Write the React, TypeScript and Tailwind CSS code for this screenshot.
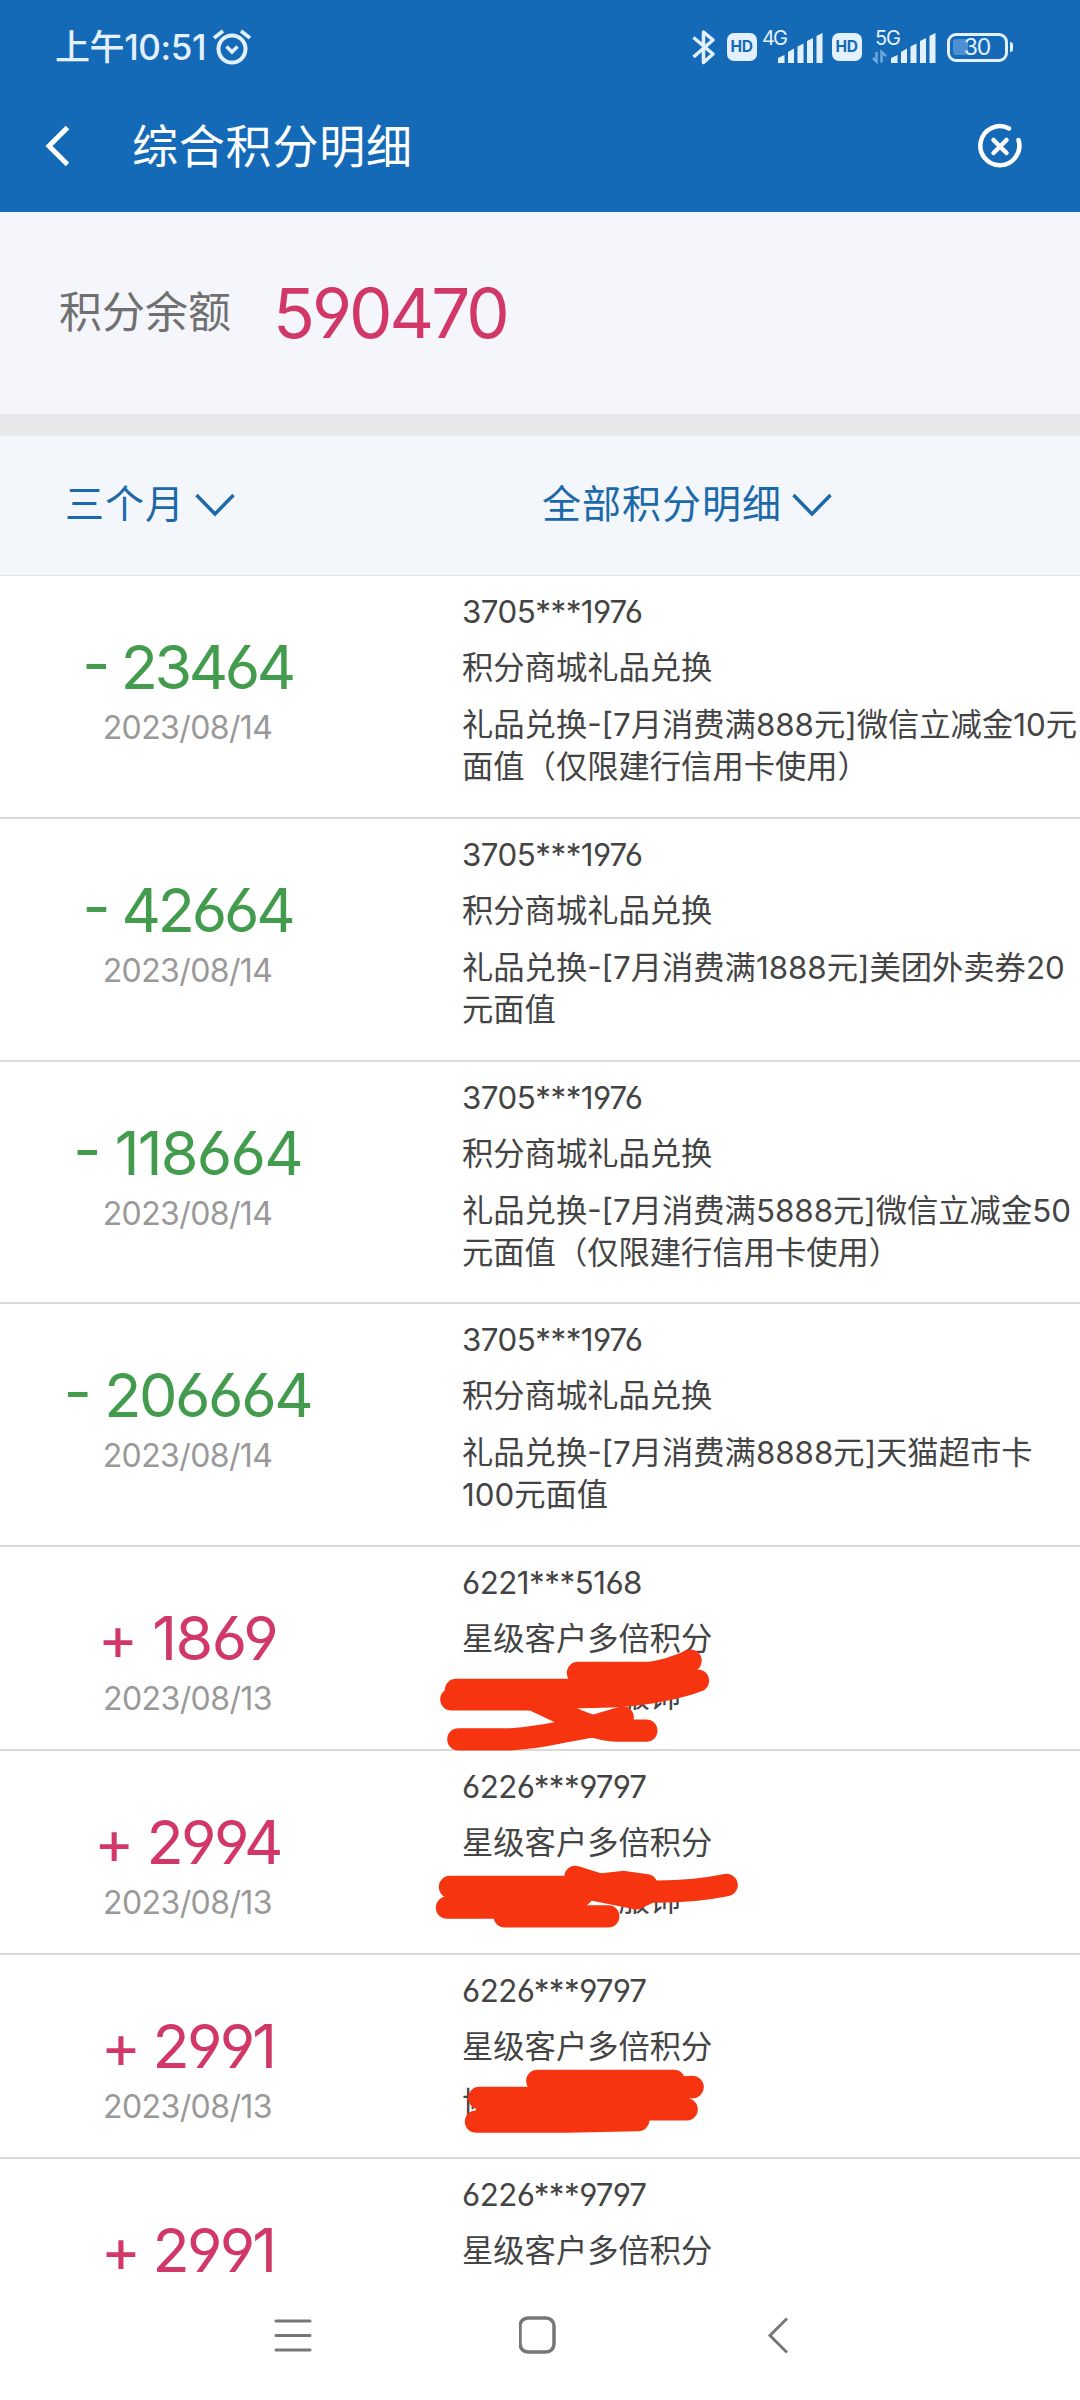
import type { ReactNode } from "react";
import clsx from "clsx";

interface Entry {
  sign: "-" | "+";
  amount: string;
  tracking: string;
  date?: string;
  card: string;
  title: string;
  detail: string[];
  mark?: ReactNode;
}

const GIFT = "积分商城礼品兑换";
const STAR = "星级客户多倍积分";

// Freehand redaction strokes drawn over a row
function Marker({ className, children }: { className: string; children: ReactNode }) {
  return (
    <svg
      viewBox="0 0 1080 660"
      className={clsx("absolute left-[420px] z-10 h-[220px] w-[360px] overflow-visible", className)}
      fill="none"
      stroke="#f63510"
      strokeWidth={67}
      strokeLinecap="round"
      strokeLinejoin="round"
    >
      {children}
    </svg>
  );
}

const MARK_A = (
  <Marker className="-top-[7px]">
    <path d="M108 450H470M94 478H345" />
    <path d="M474 399H690Q750 390 812 362" />
    <path d="M480 425L780 412" />
    <path d="M345 470Q560 475 660 462Q770 447 834 422" />
    <path d="M344 481L430 522Q520 568 590 572H679" />
    <path d="M115 598H270Q350 592 420 577L525 557L608 532" />
  </Marker>
);

const MARK_B = (
  <Marker className="-top-px">
    <path d="M90 411H470M81 473H400Q450 470 490 430M254 499H565" />
    <path d="M466 381L540 404L610 396L680 406" />
    <path d="M500 415L650 445L690 425H710Q830 424 920 405" />
  </Marker>
);

const MARK_C = (
  <Marker className="-top-[5px]">
    <path d="M352 393H762M178 444H600M168 515H440L655 510" />
    <path d="M202 480H600M300 478H800M480 430L818 411" />
  </Marker>
);

const ENTRIES: Entry[] = [
  {
    sign: "-",
    amount: "23464",
    tracking: "tracking-[-3.4px]",
    date: "2023/08/14",
    card: "3705***1976",
    title: GIFT,
    detail: ["礼品兑换-[7月消费满888元]微信立减金10元", "面值（仅限建行信用卡使用）"],
  },
  {
    sign: "-",
    amount: "42664",
    tracking: "tracking-[-3.2px]",
    date: "2023/08/14",
    card: "3705***1976",
    title: GIFT,
    detail: ["礼品兑换-[7月消费满1888元]美团外卖券20", "元面值"],
  },
  {
    sign: "-",
    amount: "118664",
    tracking: "tracking-[-1.8px]",
    date: "2023/08/14",
    card: "3705***1976",
    title: GIFT,
    detail: ["礼品兑换-[7月消费满5888元]微信立减金50", "元面值（仅限建行信用卡使用）"],
  },
  {
    sign: "-",
    amount: "206664",
    tracking: "tracking-[-2.4px]",
    date: "2023/08/14",
    card: "3705***1976",
    title: GIFT,
    detail: ["礼品兑换-[7月消费满8888元]天猫超市卡", "100元面值"],
  },
  {
    sign: "+",
    amount: "1869",
    tracking: "tracking-[-1.5px]",
    date: "2023/08/13",
    card: "6221***5168",
    title: STAR,
    detail: ["　　　　　服饰"],
    mark: MARK_A,
  },
  {
    sign: "+",
    amount: "2994",
    tracking: "tracking-[-2.6px]",
    date: "2023/08/13",
    card: "6226***9797",
    title: STAR,
    detail: ["　　　　　服饰"],
    mark: MARK_B,
  },
  {
    sign: "+",
    amount: "2991",
    tracking: "tracking-[-2.8px]",
    date: "2023/08/13",
    card: "6226***9797",
    title: STAR,
    detail: ["协"],
    mark: MARK_C,
  },
  { sign: "+", amount: "2991", tracking: "tracking-[-2.8px]", card: "6226***9797", title: STAR, detail: [] },
];

function HdBadge() {
  return (
    <span className="flex h-7 w-[30px] items-center justify-center rounded-[7px] bg-[#e3f0ff] text-[15.5px] font-bold tracking-[-0.5px] text-[#146ab7]">
      HD
    </span>
  );
}

function Signal({ label, data }: { label: string; data?: boolean }) {
  return (
    <svg width="60" height="36" viewBox="0 0 60 36" fill="#e3f0ff" className="overflow-visible">
      <text x="0" y="16" fontSize="20" fontFamily="Inter" textLength="26">{label}</text>
      <path d="M16 34v-5l6.5-3v8zM26 34V23l6-3.5V34zM35.5 34V17.5l6-3V34zM45 34V12l6-3v25zM54.5 34V7l6-3v30z" />
      {data && (
        <path d="M-2 29l3.500 3.500V23M6.500 33.500V23L11 27" fill="none" stroke="#6fa8dd" strokeWidth="2.5" />
      )}
    </svg>
  );
}

function StatusBar() {
  return (
    <div className="flex h-[94px] items-center pl-[55px] pr-[67px] text-[#e3f0ff]">
      <span className="text-[35px] font-medium leading-none tracking-[-0.4px]">上午10:51</span>
      <svg width="40" height="36" viewBox="0 0 40 36" fill="none" stroke="currentColor" strokeWidth="4" className="ml-[6px]">
        <circle cx="20" cy="20" r="13.5" />
        <path d="M2 9l9-7M38 9l-9-7M14.5 17.5l5.5 5.5 5.5-5.5" strokeWidth="3.5" />
      </svg>
      <div className="ml-auto flex items-center">
        <svg width="24" height="36" viewBox="0 0 24 36" fill="none" stroke="currentColor" strokeWidth="3.5" strokeLinejoin="round">
          <path d="M1.500 8.500L21 25 11.500 33.500V3L21 11 1.500 28" />
        </svg>
        <span className="ml-[11px]"><HdBadge /></span>
        <span className="ml-[5px]"><Signal label="4G" /></span>
        <span className="ml-[10px]"><HdBadge /></span>
        <span className="ml-[13px]"><Signal label="5G" data /></span>
        <span className="relative ml-[12px] flex h-[29px] w-[61px] items-center justify-center rounded-[9px] border-[3.5px] border-[#e3f0ff]">
          <span className="absolute left-[3.5px] top-[3px] h-4 w-[15px] rounded-[3px] bg-[#4d8fd0]" />
          <span className="relative text-[23px] leading-none tracking-[-1px]">30</span>
        </span>
        <span className="ml-[2px] h-[10px] w-[3.5px] rounded-r-[3px] bg-[#e3f0ff]" />
      </div>
    </div>
  );
}

function TitleBar() {
  return (
    <div className="flex h-[118px] items-center pb-[14px] pl-[45px] pr-[57px] text-white">
      <svg width="26" height="42" viewBox="0 0 26 42" fill="none" stroke="currentColor" strokeWidth="5">
        <path d="M22.500 2.500L4 21l18.500 18.500" />
      </svg>
      <h1 className="ml-[61px] text-[46px] leading-none tracking-[0.8px]">综合积分明细</h1>
      <svg
        width="46"
        height="46"
        viewBox="0 0 46 46"
        fill="none"
        stroke="currentColor"
        strokeWidth="4.5"
        strokeLinecap="round"
        className="ml-auto"
      >
        <path d="M32 5.500A19.500 19.500 0 1 0 41.500 17" />
        <path d="M16.500 17l13 13M29.500 17l-13 13" />
      </svg>
    </div>
  );
}

function Filter({ label }: { label: string }) {
  return (
    <button type="button" className="flex items-center gap-[10px] text-[39px] leading-none tracking-[1px] text-[#1c69a9]">
      {label}
      <svg width="40" height="24" viewBox="0 0 40 24" fill="none" stroke="currentColor" strokeWidth="3.5" className="mt-0.5">
        <path d="M1.500 2L20 21 38.500 2" />
      </svg>
    </button>
  );
}

function Row({ entry }: { entry: Entry }) {
  const spent = entry.sign === "-";

  return (
    <li
      className={clsx(
        "relative flex shrink-0 border-b-2 border-[#dadada]",
        spent ? "h-[242.75px]" : "h-[204px]",
      )}
    >
      <div className="flex w-[375px] flex-col items-center pt-[61px]">
        <p
          className={clsx(
            "text-[61px] leading-[60px]",
            entry.tracking,
            spent ? "text-[#439b4d]" : "text-[#d13868]",
          )}
        >
          <span className={clsx("inline-block", spent && "-translate-y-1")}>{entry.sign}</span> {entry.amount}
        </p>
        {entry.date && (
          <p className="mt-[10px] text-[32px] leading-[42px] tracking-[-0.6px] text-[#999]">{entry.date}</p>
        )}
      </div>
      <div className="ml-[87px] flex flex-col pt-[15px] text-[31.3px] leading-[42px] whitespace-nowrap text-[#444]">
        <p className="tracking-[-0.5px]">{entry.card}</p>
        <p className="mt-[14px]">{entry.title}</p>
        <div className="mt-[15px]">
          {entry.detail.map((line) => (
            <p key={line}>{line}</p>
          ))}
        </div>
      </div>
      {entry.mark}
    </li>
  );
}

function SystemNav() {
  return (
    <div className="flex h-[110px] shrink-0 gap-[207px] bg-white pl-[274px] pt-[24px]">
      <svg width="38" height="42" viewBox="0 0 38 42" stroke="#777" strokeWidth="3" strokeLinecap="round">
        <path d="M2 7h34M2 21.500h34M2 36h34" />
      </svg>
      <svg width="38" height="42" viewBox="0 0 38 42" fill="none" stroke="#777" strokeWidth="3.5">
        <rect x="1" y="4" width="34" height="34" rx="8" />
      </svg>
      <svg width="38" height="42" viewBox="0 0 38 42" fill="none" stroke="#777" strokeWidth="3">
        <path d="M23 4.500L6 21.500l17 17" />
      </svg>
    </div>
  );
}

export default function App() {
  return (
    <div className="flex h-[2400px] w-[1080px] flex-col overflow-hidden bg-white font-['Inter','Noto_Sans_CJK_SC',sans-serif] [font-feature-settings:'cv03','cv04']">
      <header className="h-[212px] shrink-0 bg-[#146ab7]">
        <StatusBar />
        <TitleBar />
      </header>

      <section className="flex h-[202px] shrink-0 items-center bg-[#f5f6fb] pl-[59px]">
        <span className="mb-0.5 text-[43px] leading-none text-[#707070]">积分余额</span>
        <span className="ml-[42px] text-[69px] leading-none tracking-[-3px] text-[#d13868]">590470</span>
      </section>
      <div className="h-[22px] shrink-0 bg-[#e7e8ea]" />

      <div className="flex h-[140px] shrink-0 items-center border-b border-[#e0e5ea] bg-[#f3f6fb] pb-1 pl-[65px]">
        <div className="w-[477px]">
          <Filter label="三个月" />
        </div>
        <Filter label="全部积分明细" />
      </div>

      <ul className="flex min-h-0 flex-1 flex-col overflow-hidden">
        {ENTRIES.map((entry, i) => (
          <Row key={i} entry={entry} />
        ))}
      </ul>

      <SystemNav />
    </div>
  );
}
